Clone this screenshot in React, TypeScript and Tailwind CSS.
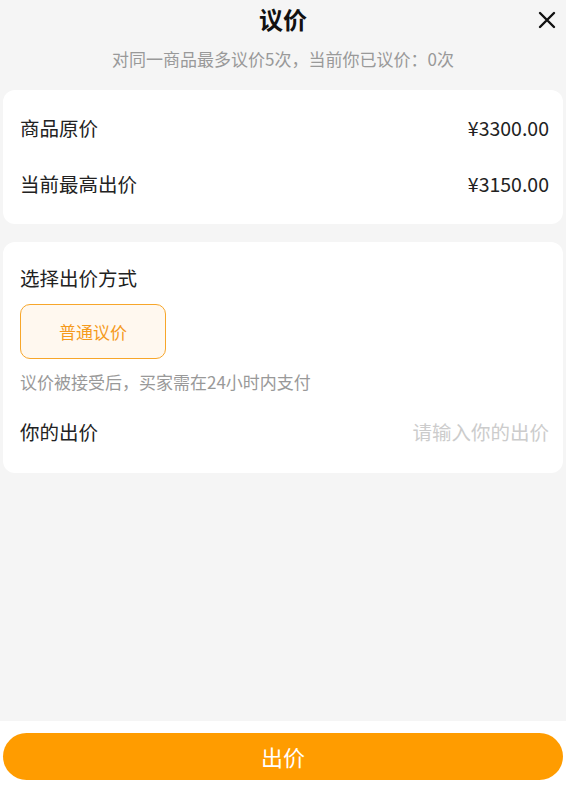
import { useState, type ReactElement } from "react";

// 议价弹窗页面
export default function App(): ReactElement {
    const [price, setPrice] = useState<string>("");

    return (
        <div className="w-full h-[789px] bg-[#f5f5f5] flex flex-col text-[#222] [font-family:'Noto_Sans_CJK_SC','Noto_Sans',sans-serif]">
            <header className="relative h-10 flex items-center justify-center">
                <h1 className="-mt-[2px] text-[24px] font-bold leading-[30px] text-[#111]">议价</h1>
                <button className="absolute right-[10px] top-[11px] cursor-pointer" title="关闭">
                    <svg width="18" height="18" viewBox="0 0 18 18" fill="none" stroke="#111" strokeWidth="2.4" strokeLinecap="round">
                        <path d="M2 2 L16 16 M16 2 L2 16" />
                    </svg>
                </button>
            </header>
            <p className="mt-[7px] mb-[19px] text-center text-[17px] leading-6 text-[#999]">对同一商品最多议价5次，当前你已议价：0次</p>

            <section className="mx-[3px] rounded-xl bg-white pt-[10px] pb-[12px] pl-[17px] pr-[14px]">
                <div className="h-14 flex items-center justify-between text-[19.5px]">
                    <span>商品原价</span>
                    <span>¥3300.00</span>
                </div>
                <div className="h-14 flex items-center justify-between text-[19.5px]">
                    <span>当前最高出价</span>
                    <span>¥3150.00</span>
                </div>
            </section>

            <section className="mx-[3px] mt-[18px] rounded-xl bg-white pt-[24px] pb-[29px] pl-[17px] pr-[14px]">
                <h2 className="text-[19.5px] leading-6">选择出价方式</h2>
                <button className="mt-[14px] w-[146px] h-[55px] rounded-[10px] border border-[#f7a62a] bg-[#fff8ef] text-[#f59a1c] text-[17px] cursor-pointer">普通议价</button>
                <p className="mt-[11px] text-[17px] leading-6 text-[#999]">议价被接受后，买家需在24小时内支付</p>
                <label className="mt-[26px] flex items-center justify-between text-[19.5px] leading-6">
                    <span>你的出价</span>
                    <input
                        type="text"
                        value={price}
                        onChange={(e) => setPrice(e.target.value)}
                        placeholder="请输入你的出价"
                        className="w-[220px] text-right outline-none placeholder:text-[#ccc] bg-transparent"
                    />
                </label>
            </section>

            <div className="flex-1" />

            <footer className="bg-white pt-3 pb-[9px] px-[3px]">
                <button className="w-full h-[47px] rounded-full bg-[#ff9c00] text-white text-[22px] cursor-pointer">出价</button>
            </footer>
        </div>
    );
}
